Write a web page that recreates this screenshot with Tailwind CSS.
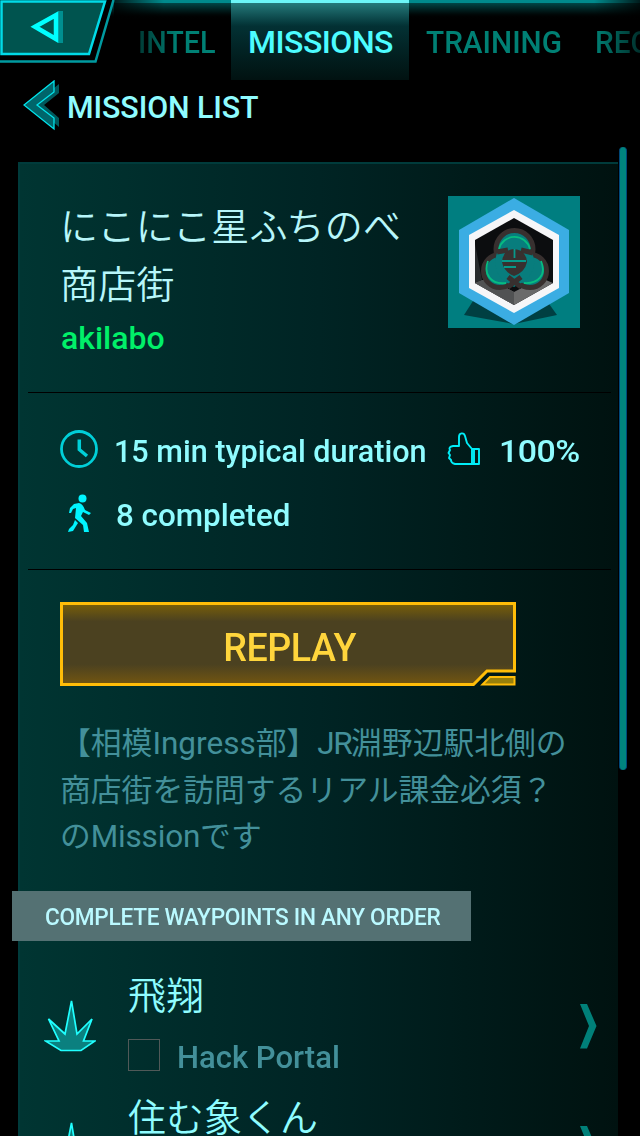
<!DOCTYPE html>
<html lang="ja">
<head>
<meta charset="utf-8">
<title>Mission</title>
<script src="https://cdn.jsdelivr.net/npm/@tailwindcss/browser@4"></script>
</head>
<body class="bg-black">
<main class="relative flex h-[1136px] w-[640px] flex-col overflow-hidden bg-black font-['Roboto','Noto_Sans_CJK_JP',sans-serif] font-medium text-[#8ffcff]">

  <header class="relative flex h-20 shrink-0 items-start">
    <div class="absolute inset-x-0 top-0 h-5 bg-linear-to-b from-[#005a5a] to-black"></div>
    <div class="absolute inset-x-0 top-0 h-[3px] bg-[#008a8c]"></div>
    <div class="absolute top-0 left-[114px] h-5 w-[50px] bg-linear-to-r from-black/80 to-transparent"></div>
    <div class="absolute top-0 right-0 h-5 w-[46px] bg-linear-to-r from-transparent to-black/80"></div>
    <svg class="relative h-16 w-[116px] shrink-0" viewBox="0 0 116 64">
      <path d="M0 0H114.500L96 62.500H0Z" fill="#000"/>
      <path d="M113.500 0L95.500 61.500H0" fill="none" stroke="#009aa0" stroke-width="2.500"/>
      <path d="M1.500 1.500H105L89 54H1.500Z" fill="#00544f" stroke="#00dbe8" stroke-width="2.500"/>
      <path d="M58 11h5v32h-5z" fill="#008f90"/>
      <path d="M35 26.800L56 15v24Z" fill="#00544f" stroke="#00ffff" stroke-width="4.500"/>
    </svg>
    <nav class="relative flex h-20 grow overflow-hidden text-[32px] leading-[84px] whitespace-nowrap text-[#008074]">
      <span class="w-[115px] shrink-0 pl-[22px]"><span class="inline-block origin-left scale-x-[0.9] bg-linear-to-r from-[#003a35] to-[#008074] to-50% bg-clip-text text-transparent">INTEL</span></span>
      <span class="w-[178px] shrink-0 border-t-[3px] border-[#6cf6f8] bg-linear-to-b from-[#257b7c] via-[#033134] via-30% to-[#011211] pl-px text-center leading-[78px] tracking-[-0.5px] text-[#4dfcff]">MISSIONS</span>
      <span class="w-[186px] shrink-0 pl-[17px]"><span class="inline-block origin-left scale-x-[0.93]">TRAINING</span></span>
      <span class="inline-block origin-left scale-x-[0.93] bg-linear-to-r from-[#008074] to-[#001a18] to-50% bg-clip-text text-transparent">RECRUIT</span>
    </nav>
  </header>

  <div class="flex h-[82px] shrink-0 pl-[23px]">
    <svg class="h-[52px] w-[38px]" viewBox="0 0 38 52">
      <path d="M36 4v9L21 25l15 13v9L10 25Z" fill="#00595c"/>
      <path d="M31 1v11L14 25l17 13v11L1 25Z" fill="#00656a" stroke="#00e4ec" stroke-width="1.300"/>
    </svg>
    <h1 class="origin-left translate-x-1.5 scale-x-[0.95] text-[32px] leading-[54px] font-medium tracking-[-0.1px] whitespace-nowrap">MISSION LIST</h1>
  </div>

  <section class="ml-[18px] flex h-[974px] w-[600px] shrink-0 flex-col border-t-2 border-l-2 border-[#003b3b] bg-linear-to-r from-[#003532] via-[#002424] via-50% to-[#001210]">
    <div class="ml-2 flex h-[229px] w-[583px] shrink-0 justify-between border-b border-black pt-8 pr-[31px] pl-8">
      <div class="whitespace-nowrap">
        <h2 class="pt-0.5 text-[38px] leading-[58px] font-[350] tracking-[0.2px] text-[#b7f6fa]">にこにこ星ふちのべ<br>商店街</h2>
        <p class="pl-px text-[32px] leading-[48px] text-[#00f069]">akilabo</p>
      </div>
      <svg class="h-[132px] w-[132px] shrink-0" viewBox="0 0 132 132">
        <path d="M0 0h132v132H0z" fill="#007e80"/>
        <path d="M25 105L16 119L66 128L109 119L99 105Z" fill="#003f42"/>
        <path d="M66 2L121 34V97L66 129L11 97V34Z" fill="#3badE3"/>
        <path d="M66 14L111 39V92L66 117L21 92V39Z" fill="#f6f6f8"/>
        <path d="M66 22L105 44V87L66 109L27 87V44Z" fill="#0c0d0f"/>
        <path d="M27 48L34 84L27 87Z" fill="#282a2c"/>
        <path d="M27 87L40 82L66 96L93 82L105 87L66 109Z" fill="#6a6a6a"/>
        <path d="M27 87L40 82L66 96V109Z" fill="#515253"/>
        <g fill="#087d7d" stroke="#38302f" stroke-width="5">
          <circle cx="52" cy="75" r="16.500"/><circle cx="82" cy="75" r="16.500"/><circle cx="66.500" cy="53" r="18.500"/>
        </g>
        <path d="M49 57Q43 73 56 85L66 91L77 85Q91 71 84 57Z" fill="#087d7d"/>
        <g fill="none" stroke="#07bc80" stroke-width="1.800">
          <path d="M51 53A16 16 0 0 1 82 53M40 65C35 78 43 89 58 87M93 65C99 79 90 88 76 87"/>
        </g>
        <path d="M66 53Q78 54 79 66Q77 76 66 80Q56 76 54 66Q55 54 66 53Z" fill="#38302f"/>
        <path d="M54 65h24M56 71h12M66.500 53v9" stroke="#07998a" stroke-width="1.800"/>
        <path d="M49 56l11-2M73 54l12 3M60 81l13 10M73 81l-13 10" stroke="#38302f" stroke-width="5"/>
      </svg>
    </div>

    <div class="ml-2 flex h-[177px] w-[583px] shrink-0 flex-col border-b border-black pt-6 pl-8 text-[32px] whitespace-nowrap">
      <div class="flex h-16 items-center">
        <svg class="h-[38px] w-[38px] shrink-0" viewBox="0 0 38 38" fill="none" stroke="#00cfd8">
          <circle cx="19" cy="19" r="17.500" stroke-width="2.800"/>
          <path d="M19.300 9.500V19.500L27 26" stroke-width="3.500"/>
        </svg>
        <span class="w-[349px] shrink-0 pt-1 pl-4"><span class="inline-block origin-left scale-x-[0.955]">15 min typical duration</span></span>
        <svg class="h-[34px] w-[34px] shrink-0" viewBox="0 0 34 34" fill="none" stroke="#00eef8" stroke-width="1.900" stroke-linejoin="round">
          <path d="M12 14V5C12 .5 17 .2 18 4L20 11L25 17V32H8Q4 31 4 28L2 26L3 23L1.500 21L3 18Q1 15 6 14Z"/>
          <path d="M25 17h7v15H8M27 17v15"/>
        </svg>
        <span class="ml-[18px] origin-left scale-x-[1.06] pt-1 tracking-[-0.5px]">100%</span>
      </div>
      <div class="flex h-16 items-center">
        <svg class="h-[38px] w-[38px]" viewBox="0 0 38 38">
          <circle cx="22.500" cy="4.500" r="4" fill="#00f4ff"/>
          <path d="M14 10L19 9Q23 10 25 16L31 19L29 21L23 18L21 22L27 29L29 38H24L23 31L15 24L16 14L13 15L11 19L9 19L10 14Z" fill="#00f4ff"/>
          <path d="M15 26L18 29L13 37L8 38L9 35L13 31Z" fill="#00f4ff"/>
        </svg>
        <span class="ml-[18px] origin-left scale-x-[0.98] pt-1">8 completed</span>
      </div>
    </div>

    <div class="mt-8 ml-10 grid h-[84px] w-[456px] shrink-0 place-items-center">
      <svg class="col-start-1 row-start-1 h-[84px] w-[456px]" viewBox="0 0 456 84">
        <defs><linearGradient id="gold" x1="0" y1="0" x2="0" y2="1">
          <stop offset="0" stop-color="#7a6008"/><stop offset=".22" stop-color="#4b4120"/><stop offset=".75" stop-color="#4b4120"/><stop offset="1" stop-color="#735610"/>
        </linearGradient></defs>
        <path d="M1.500 1.500H454.500V69H427L413.500 82.500H1.500Z" fill="url(#gold)" stroke="#ffbd08" stroke-width="3"/>
        <path d="M422.500 82.500L430 75H454.500V82.500Z" fill="#98800b" stroke="#ffbd08" stroke-width="2"/>
      </svg>
      <span class="col-start-1 row-start-1 scale-x-[0.965] pt-2 pl-1 text-[39px] leading-none tracking-[-0.5px] text-[#ffd53c]">REPLAY</span>
    </div>

    <p class="mt-[35px] ml-10 h-[170px] shrink-0 text-[30.8px] leading-[46.7px] font-normal whitespace-nowrap text-[#43909a]">【相模<span class="text-[31.500px] leading-none">Ingress</span>部】<span class="text-[31.500px] leading-none tracking-[-1.500px]">JR</span>淵野辺駅北側の<br>商店街を訪問するリアル課金必須？<br>の<span class="text-[31.500px] leading-none tracking-[-0.2px]">Mission</span>です</p>

    <h3 class="-ml-2 flex h-[50px] w-[459px] shrink-0 items-center bg-[#547173] pt-0.5 pl-[33px] text-[24px] font-medium tracking-[-0.3px] whitespace-nowrap text-[#baf9ff]"><span class="origin-left scale-x-[0.943]">COMPLETE WAYPOINTS IN ANY ORDER</span></h3>

    <div class="mt-[26px] ml-6 flex h-[122px] shrink-0">
      <svg class="mt-8 h-14 w-[52px] shrink-0" viewBox="0 0 52 56"><path d="M27.500 2L33 35L48 20L39.500 42H51L37 51.500H17L1.500 42H15L4.500 20L21 35Z" fill="#0b807f" stroke="#20ffff" stroke-width="1.700"/></svg>
      <div class="w-[452px] shrink-0 pl-8 whitespace-nowrap">
        <p class="text-[38px] leading-[58px] font-[350]">飛翔</p>
        <div class="mt-3 flex h-9 items-center"><i class="h-8 w-8 border border-[#505958]"></i><span class="ml-[17px] origin-left scale-x-[0.97] pt-1 text-[32px] leading-none text-[#43909a]">Hack Portal</span></div>
      </div>
      <svg class="mt-9 ml-8 h-[46px] w-[18px]" viewBox="0 0 18 46"><path d="M0 1H7L16.500 23L7 45.500H0L9 23Z" fill="#008079"/></svg>
    </div>
    <div class="ml-6 flex h-[122px] shrink-0">
      <svg class="mt-8 h-14 w-[52px] shrink-0" viewBox="0 0 52 56"><path d="M27.500 2L33 35L48 20L39.500 42H51L37 51.500H17L1.500 42H15L4.500 20L21 35Z" fill="#0b807f" stroke="#20ffff" stroke-width="1.700"/></svg>
      <div class="w-[452px] shrink-0 pl-8 whitespace-nowrap"><p class="text-[38px] leading-[58px] font-[350]">住む象くん</p></div>
      <svg class="mt-9 ml-8 h-[46px] w-[18px]" viewBox="0 0 18 46"><path d="M0 1H7L16.500 23L7 45.500H0L9 23Z" fill="#008079"/></svg>
    </div>
  </section>

  <div class="absolute top-[147px] left-[619px] h-[623px] w-2 rounded-sm border-x border-[#004778] bg-[#00847e]"></div>
</main>
</body>
</html>
